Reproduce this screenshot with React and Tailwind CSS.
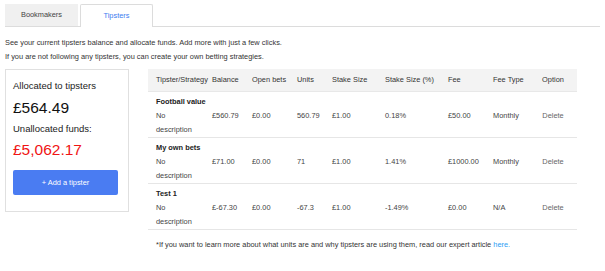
import React from "react";

const rows = [
  {
    name: "Football value",
    balance: "£560.79",
    open: "£0.00",
    units: "560.79",
    stake: "£1.00",
    pct: "0.18%",
    fee: "£50.00",
    feeType: "Monthly",
  },
  {
    name: "My own bets",
    balance: "£71.00",
    open: "£0.00",
    units: "71",
    stake: "£1.00",
    pct: "1.41%",
    fee: "£1000.00",
    feeType: "Monthly",
  },
  {
    name: "Test 1",
    balance: "£-67.30",
    open: "£0.00",
    units: "-67.3",
    stake: "£1.00",
    pct: "-1.49%",
    fee: "£0.00",
    feeType: "N/A",
  },
];

const cols = "grid grid-cols-[56px_40px_45px_35px_53px_63px_45px_44px_48px]";

const App = () => {
  return (
    <div className="w-[605px] h-[271px] bg-white px-[5px] pt-[4px] font-['Liberation_Sans',Arial,sans-serif] text-[#333]">
      <div className="flex items-end h-[23px] border-b border-[#dcdcdc]">
        <div className="w-[73px] h-[22px] bg-[#f0f0f0] flex items-center justify-center text-[7.4px] text-[#444]">
          Bookmakers
        </div>
        <div className="ml-[2px] w-[73px] h-[23px] -mb-px bg-white border border-b-0 border-[#dcdcdc] rounded-t-[2px] flex items-center justify-center text-[7.4px] text-[#3b7cf0]">
          Tipsters
        </div>
      </div>

      <div className="mt-[9px] text-[7.4px] leading-[14px]">
        <p>See your current tipsters balance and allocate funds. Add more with just a few clicks.</p>
        <p>If you are not following any tipsters, you can create your own betting strategies.</p>
      </div>

      <div className="mt-[5px] flex items-start">
        <div className="w-[124px] h-[143px] border border-[#e0e0e0] px-[7px] pt-[10px]">
          <div className="text-[9.5px] leading-[12px] text-[#222]">Allocated to tipsters</div>
          <div className="mt-[6px] text-[15.5px] leading-[20px] text-[#111]">£564.49</div>
          <div className="mt-[5px] text-[9.5px] leading-[12px] text-[#222]">Unallocated funds:</div>
          <div className="mt-[5px] text-[15.5px] leading-[20px] text-[#f01414]">£5,062.17</div>
          <button className="mt-[10px] w-[105px] h-[25px] bg-[#4a7cf2] rounded-[2px] text-white text-[7.4px] flex items-center justify-center">
            + Add a tipster
          </button>
        </div>

        <div className="ml-[19px] w-[429px]">
          <div className={`${cols} h-[23px] items-center bg-[#f3f3f3] text-[7.4px] text-[#333] border-b border-[#e8e8e8] whitespace-nowrap`}>
            <div className="pl-[8px]">Tipster/Strategy</div>
            <div className="pl-[8px]">Balance</div>
            <div className="pl-[8px]">Open bets</div>
            <div className="pl-[8px]">Units</div>
            <div className="pl-[8px]">Stake Size</div>
            <div className="pl-[8px]">Stake Size (%)</div>
            <div className="pl-[8px]">Fee</div>
            <div className="pl-[8px]">Fee Type</div>
            <div className="text-center">Option</div>
          </div>
          {rows.map((r) => (
            <div key={r.name} className="h-[46px] pt-[3px] border-b border-[#e6e6e6] text-[7.4px] leading-[14px]">
              <div className="pl-[8px] font-bold text-[#222]">{r.name}</div>
              <div className={`${cols} text-[#444]`}>
                <div className="pl-[8px] pr-[4px]">No description</div>
                <div className="pl-[8px]">{r.balance}</div>
                <div className="pl-[8px]">{r.open}</div>
                <div className="pl-[8px]">{r.units}</div>
                <div className="pl-[8px]">{r.stake}</div>
                <div className="pl-[8px]">{r.pct}</div>
                <div className="pl-[8px]">{r.fee}</div>
                <div className="pl-[8px]">{r.feeType}</div>
                <div className="text-center text-[#666]">Delete</div>
              </div>
            </div>
          ))}
          <p className="mt-[9px] pl-[8px] text-[7.4px] leading-[12px]">
            *If you want to learn more about what units are and why tipsters are using them, read our expert article{" "}
            <a className="text-[#2a9df4]" href="#">here.</a>
          </p>
        </div>
      </div>
    </div>
  );
};

export default App;
